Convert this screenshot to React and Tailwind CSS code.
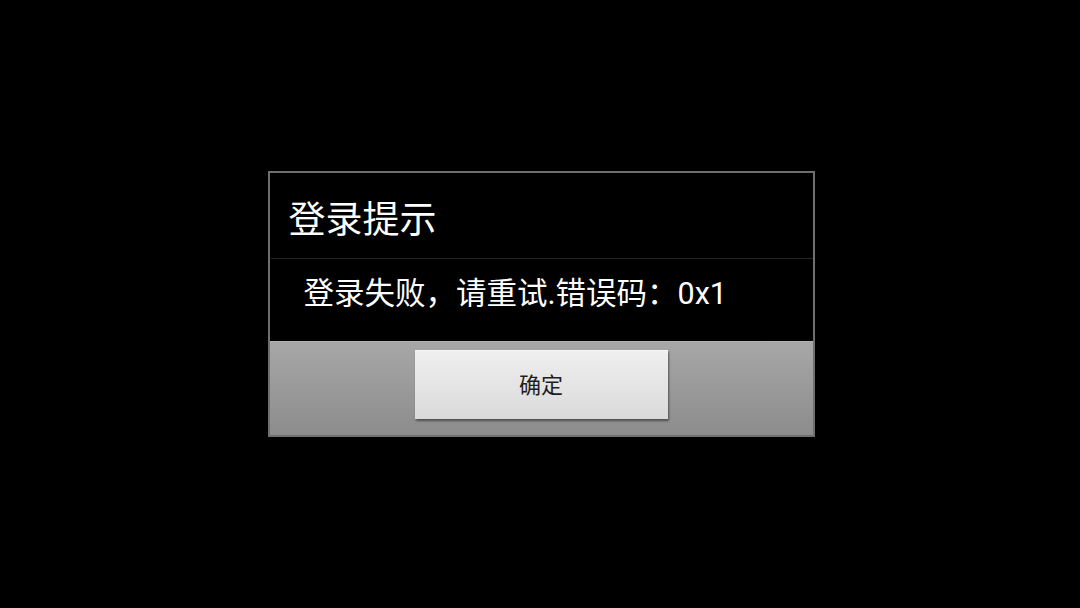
export default function App() {
  return (
    <div
      className="w-full h-screen bg-black flex items-center justify-center"
      style={{ fontFamily: 'Roboto, "Noto Sans CJK SC", sans-serif' }}
    >
      <div className="w-[547px] ml-[2px] border-2 border-[#6f6f6f] bg-black flex flex-col">
        <div className="h-[85px] flex items-center pl-[19px] pt-[10px] text-white text-[37px] leading-none">
          登录提示
        </div>
        <div className="h-px bg-[#262626] ml-[1px]" />
        <div className="h-[82px] flex items-center pl-[34px] pb-[12px] text-white text-[30.5px] leading-none">
          登录失败，请重试.错误码：0x1
        </div>
        <div className="h-[94px] border-t border-[#b0b0b0] bg-gradient-to-b from-[#a7a7a7] to-[#8c8c8c] flex justify-center pt-[8px]">
          <button className="w-[253px] h-[69px] bg-gradient-to-b from-[#efefef] to-[#dadada] text-[#1e1e1e] text-[22px] shadow-[1px_2px_2px_rgba(0,0,0,0.45)] border-t border-[#f6f6f6]">
            确定
          </button>
        </div>
      </div>
    </div>
  )
}
